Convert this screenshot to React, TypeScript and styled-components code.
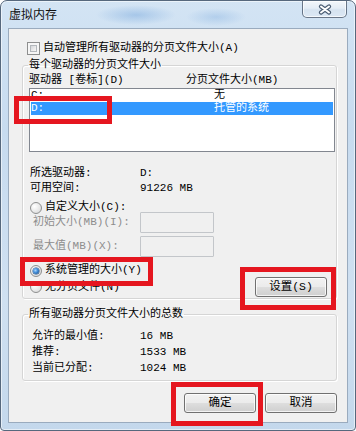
import React from 'react';
import styled, { createGlobalStyle, css } from 'styled-components';

// 西文用等宽字体（接近宋体的半角字形），中文回退到 Noto Sans CJK
const FONT = `"Liberation Mono", "Noto Sans CJK SC", monospace`;

const GlobalStyle = createGlobalStyle`
  html, body {
    margin: 0;
    padding: 0;
    background: #ffffff;
  }
  body {
    font-family: ${FONT};
  }
`;

const drives = [
  { drive: 'C:', size: '无', selected: false },
  { drive: 'D:', size: '托管的系统', selected: true },
];

const summary = [
  { label: '允许的最小值:', value: '16 MB' },
  { label: '推荐:', value: '1533 MB' },
  { label: '当前已分配:', value: '1024 MB' },
];

// 标注用的红框，按截图坐标放置
const marks = [
  { left: 13, top: 95, width: 98, height: 28 },
  { left: 19, top: 256, width: 133, height: 29 },
  { left: 239, top: 266, width: 96, height: 43 },
  { left: 170, top: 381, width: 92, height: 44 },
];

const App: React.FC = () => {
  return (
    <>
      <GlobalStyle />
      <Window>
        <TitleBar>
          <Title>虚拟内存</Title>
          <CloseButton aria-label="关闭">
            <svg width="14" height="11" viewBox="0 0 14 11">
              <path d="M3 2.5 L11 8.5 M11 2.5 L3 8.5" stroke="#4a5c72" strokeWidth="4.2" strokeLinecap="round" fill="none" />
              <path d="M3 2.5 L11 8.5 M11 2.5 L3 8.5" stroke="#ffffff" strokeWidth="2" strokeLinecap="round" fill="none" />
            </svg>
          </CloseButton>
        </TitleBar>

        <Client>
          <CheckRow>
            <CheckBox />
            <span>自动管理所有驱动器的分页文件大小(A)</span>
          </CheckRow>

          <GroupBox $top={4} $padTop={2} $padBottom={1}>
            <Legend>每个驱动器的分页文件大小</Legend>
            <HeaderRow>
              <span>驱动器 [卷标](D)</span>
              <span>分页文件大小(MB)</span>
            </HeaderRow>
            <ListBox>
              {drives.map(d => (
                <ListRow key={d.drive} $selected={d.selected}>
                  <span>{d.drive}</span>
                  <span>{d.size}</span>
                </ListRow>
              ))}
            </ListBox>

            <InfoBlock>
              <InfoRow $height={15} $indent={1}>
                <span>所选驱动器:</span>
                <span>D:</span>
              </InfoRow>
              <InfoRow $height={15} $indent={1}>
                <span>可用空间:</span>
                <span>91226 MB</span>
              </InfoRow>
            </InfoBlock>

            <RadioRow $top={5}>
              <Radio />
              <span>自定义大小(C):</span>
            </RadioRow>
            <FieldList>
              <FieldRow>
                <FieldLabel>初始大小(MB)(I):</FieldLabel>
                <TextBox disabled />
              </FieldRow>
              <FieldRow>
                <FieldLabel>最大值(MB)(X):</FieldLabel>
                <TextBox disabled />
              </FieldRow>
            </FieldList>

            <RadioRow $top={7}>
              <Radio $checked />
              <span>系统管理的大小(Y)</span>
            </RadioRow>
            <BottomRow>
              <RadioRow $top={0}>
                <Radio />
                <span>无分页文件(N)</span>
              </RadioRow>
              <Button>设置(S)</Button>
            </BottomRow>
          </GroupBox>

          <GroupBox $top={9} $padTop={7} $padBottom={4}>
            <Legend>所有驱动器分页文件大小的总数</Legend>
            {summary.map(s => (
              <InfoRow key={s.label} $height={16} $indent={3}>
                <span>{s.label}</span>
                <span>{s.value}</span>
              </InfoRow>
            ))}
          </GroupBox>

          <ButtonBar>
            <Button>确定</Button>
            <Button>取消</Button>
          </ButtonBar>
        </Client>

        {marks.map((m, i) => (
          <Highlight
            key={i}
            style={{ left: m.left, top: m.top, width: m.width, height: m.height }}
          />
        ))}
      </Window>
    </>
  );
};

const Window = styled.div`
  position: relative;
  width: 356px;
  height: 431px;
  box-sizing: border-box;
  display: flex;
  flex-direction: column;
  border: 1px solid #56687d;
  border-radius: 7px 7px 4px 4px;
  overflow: hidden;
  background:
    radial-gradient(ellipse 40px 10px at 135px 14px, rgba(86, 146, 212, 0.35), transparent),
    radial-gradient(ellipse 30px 9px at 215px 16px, rgba(86, 146, 212, 0.25), transparent),
    linear-gradient(180deg, #d3e4f4 0%, #c7dbef 30%, #cfe0f1 70%, #c4d8ec 100%);
  box-shadow: inset 0 0 0 1px rgba(255, 255, 255, 0.55);
  font-family: ${FONT};
  font-size: 11px;
  color: #000;
`;

const TitleBar = styled.div`
  height: 27px;
  flex-shrink: 0;
  display: flex;
  justify-content: space-between;
  align-items: flex-start;
  padding: 0 8px;
`;

const Title = styled.div`
  margin-top: 8px;
  font-size: 12px;
  line-height: 14px;
  color: #111;
`;

const CloseButton = styled.button`
  width: 45px;
  height: 18px;
  margin-top: -1px;
  padding: 0;
  display: flex;
  align-items: center;
  justify-content: center;
  box-sizing: border-box;
  border: 1px solid rgba(60, 76, 98, 0.75);
  border-radius: 0 0 5px 5px;
  background: linear-gradient(180deg, #f3f7fb 0%, #e4edf6 45%, #d6e3f0 55%, #dce8f4 100%);
  box-shadow: inset 0 0 0 1px rgba(255, 255, 255, 0.7);
`;

const Client = styled.div`
  flex: 1;
  margin: 0 7px 7px 7px;
  display: flex;
  flex-direction: column;
  box-sizing: border-box;
  padding: 13px 10px 0 13px;
  border: 1px solid #9aabbe;
  background: #f0f0f0;
`;

const CheckRow = styled.div`
  display: flex;
  align-items: center;
  gap: 3px;
  height: 13px;
  line-height: 13px;
  padding-left: 5px;
`;

const CheckBox = styled.span`
  position: relative;
  width: 13px;
  height: 13px;
  box-sizing: border-box;
  border: 1px solid #8e8f8f;
  background: #f6f6f6;

  &::after {
    content: '';
    position: absolute;
    inset: 2px;
    border: 1px solid #b4b8bd;
    background: linear-gradient(135deg, #d3d5d9 0%, #ececec 60%, #f7f7f7 100%);
  }
`;

const GroupBox = styled.fieldset<{ $top: number; $padTop: number; $padBottom: number }>`
  margin: ${p => p.$top}px 0 0 0;
  padding: ${p => p.$padTop}px 0 ${p => p.$padBottom}px 6px;
  min-width: 0;
  border: 1px solid #d5d5d5;
  border-radius: 3px;
  box-shadow: inset 1px 1px 0 #ffffff, 1px 1px 0 #ffffff;
`;

const Legend = styled.legend`
  padding: 0 1px;
  margin-left: -1px;
  font-size: 11px;
  line-height: 13px;
`;

const HeaderRow = styled.div`
  display: grid;
  grid-template-columns: 157px 1fr;
  height: 13px;
  line-height: 13px;
`;

const ListBox = styled.div`
  margin: 1px 1px 0 0;
  height: 64px;
  box-sizing: border-box;
  padding: 0 1px;
  border: 1px solid #828790;
  background: #ffffff;
`;

const ListRow = styled.div<{ $selected?: boolean }>`
  display: grid;
  grid-template-columns: 183px 1fr;
  height: 13px;
  line-height: 13px;
  ${p =>
    p.$selected &&
    css`
      background: #3399ff;
      color: #ffffff;
    `}
`;

const InfoBlock = styled.div`
  margin-top: 14px;
`;

const InfoRow = styled.div<{ $height: number; $indent: number }>`
  display: grid;
  grid-template-columns: ${p => 111 - p.$indent}px 1fr;
  padding-left: ${p => p.$indent}px;
  height: ${p => p.$height}px;
  line-height: ${p => p.$height}px;
`;

const RadioRow = styled.div<{ $top: number }>`
  display: flex;
  align-items: center;
  gap: 3px;
  margin-top: ${p => p.$top}px;
  padding-left: 1px;
  height: 13px;
  line-height: 13px;
`;

const Radio = styled.span<{ $checked?: boolean }>`
  position: relative;
  width: 12px;
  height: 12px;
  box-sizing: border-box;
  border-radius: 50%;
  border: 1px solid #8e8f8f;
  background: radial-gradient(circle at 35% 35%, #ffffff 0%, #e6e6e6 60%, #d0d0d0 100%);

  ${p =>
    p.$checked &&
    css`
      &::after {
        content: '';
        position: absolute;
        left: 2px;
        top: 2px;
        width: 6px;
        height: 6px;
        border-radius: 50%;
        background: radial-gradient(circle at 40% 40%, #a9d6fb 0%, #3f8ad6 45%, #123f73 100%);
        box-shadow: 0 0 0 0.5px #1d4f86;
      }
    `}
`;

const FieldList = styled.div`
  margin-top: -2px;
  display: flex;
  flex-direction: column;
  gap: 3px;
`;

const FieldRow = styled.div`
  display: grid;
  grid-template-columns: 111px 74px;
  align-items: center;
  height: 21px;
`;

const FieldLabel = styled.span`
  padding-left: 4px;
  color: #8d8d8d;
  line-height: 13px;
`;

const TextBox = styled.input`
  width: 74px;
  height: 21px;
  box-sizing: border-box;
  margin: 0;
  border: 1px solid #c3c6ca;
  border-radius: 1px;
  background: #f0f0f0;
`;

const BottomRow = styled.div`
  display: flex;
  justify-content: space-between;
  align-items: center;
  height: 20px;
  padding-right: 9px;
`;

const Button = styled.button`
  width: 72px;
  height: 20px;
  box-sizing: border-box;
  padding: 0;
  border: 1px solid #707070;
  border-radius: 3px;
  background: linear-gradient(180deg, #f2f2f2 0%, #ebebeb 48%, #dddddd 52%, #cfcfcf 100%);
  box-shadow: inset 0 0 0 1px rgba(255, 255, 255, 0.75);
  font-family: ${FONT};
  font-size: 11.5px;
  line-height: 18px;
  color: #000;
`;

const ButtonBar = styled.div`
  display: flex;
  justify-content: flex-end;
  gap: 9px;
  margin-top: 12px;
`;

const Highlight = styled.div`
  position: absolute;
  box-sizing: border-box;
  border: 5px solid #e5161f;
  pointer-events: none;
`;

export default App;
